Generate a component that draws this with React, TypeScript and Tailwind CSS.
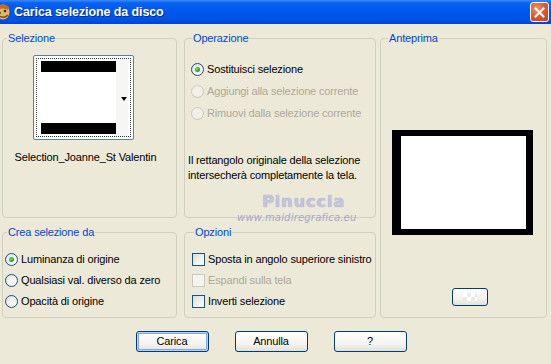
import React from 'react';

const font = "font-['Liberation_Sans',Arial,sans-serif]";

function Group({ label, className, labelClass, children }: { label: string; className?: string; labelClass?: string; children?: React.ReactNode }) {
  return (
    <fieldset className={`relative min-w-0 border border-[#D0D0BF] rounded-[4px] ${className ?? ''}`}>
      <legend className={`px-[1px] text-[11px] leading-[14px] text-[#0046D5] ${labelClass ?? 'ml-[5px]'}`}>{label}</legend>
      {children}
    </fieldset>
  );
}

function Radio({ checked, disabled, label }: { checked?: boolean; disabled?: boolean; label: string }) {
  return (
    <div className="flex items-center h-[20px] whitespace-nowrap">
      <span
        className={`relative w-[13px] h-[13px] rounded-full border shrink-0 ${
          disabled
            ? 'border-[#CAC8BB] bg-[#F0EFE8]'
            : 'border-[#1C5180] bg-[radial-gradient(circle_at_65%_65%,#FFFFFF_0%,#F4F3EE_40%,#DCDBD4_100%)]'
        }`}
      >
        {checked && (
          <span className="absolute left-[3px] top-[3px] w-[5px] h-[5px] rounded-full bg-[radial-gradient(circle_at_40%_40%,#7BE07B_0%,#21A121_60%,#1A7A1A_100%)]" />
        )}
      </span>
      <span className={`ml-[3px] text-[11px] ${disabled ? 'text-[#ACA899]' : 'text-black'}`}>{label}</span>
    </div>
  );
}

function Check({ disabled, label }: { disabled?: boolean; label: string }) {
  return (
    <div className="flex items-center h-[20px] whitespace-nowrap">
      <span
        className={`w-[13px] h-[13px] border shrink-0 ${
          disabled
            ? 'border-[#CAC8BB] bg-[#F4F3EE]'
            : 'border-[#1C5180] bg-[linear-gradient(135deg,#DCDCD7_0%,#F3F3EF_60%,#FFFFFF_100%)]'
        }`}
      />
      <span className={`ml-[3px] text-[11px] ${disabled ? 'text-[#ACA899]' : 'text-black'}`}>{label}</span>
    </div>
  );
}

function XpButton({ children, isDefault }: { children: React.ReactNode; isDefault?: boolean }) {
  return (
    <button
      className={`w-[73px] h-[21px] rounded-[3px] border border-[#003C74] text-[11px] text-black bg-[linear-gradient(to_bottom,#FFFFFF_0%,#F5F4F0_60%,#E3E1D7_100%)] ${
        isDefault ? 'shadow-[inset_0_0_0_1px_#B9D1FA,inset_0_0_0_2px_#86A7E3]' : ''
      }`}
    >
      {children}
    </button>
  );
}

export default function App() {
  return (
    <div className={`w-[551px] h-[364px] overflow-hidden bg-[#ECE9D8] flex flex-col tracking-[-0.15px] ${font}`}>
      {/* Title bar */}
      <div className="relative h-[24px] shrink-0 flex items-center bg-[linear-gradient(to_bottom,#3A8CFF_0%,#0A62F0_12%,#0058EE_45%,#0053E6_80%,#0046D2_100%)]">
        <svg width="14" height="18" viewBox="0 0 14 18" className="ml-[-4px] shrink-0">
          <ellipse cx="7" cy="9" rx="6.5" ry="7.5" fill="#E9B26A" />
          <path d="M2 4 Q7 -1 13 4 L12 7 Q7 4 2 7 Z" fill="#C96A1E" />
          <circle cx="9" cy="8" r="1.3" fill="#3A2A10" />
          <path d="M3 13 Q8 16 12 12" stroke="#8A4A12" strokeWidth="1.5" fill="none" />
          <circle cx="4" cy="10" r="1.2" fill="#2A9A2A" />
        </svg>
        <span className="ml-[4px] text-white font-bold text-[12.5px] tracking-[-0.1px] [text-shadow:1px_1px_0_#0A2A8A]">
          Carica selezione da disco
        </span>
        <div className="ml-auto mr-[2px] w-[19px] h-[20px] rounded-[3px] border border-white flex items-center justify-center bg-[radial-gradient(circle_at_35%_30%,#F0916A_0%,#E0582E_50%,#C43A16_100%)]">
          <svg width="11" height="11" viewBox="0 0 11 11">
            <path d="M1.5 1.5 L9.5 9.5 M9.5 1.5 L1.5 9.5" stroke="white" strokeWidth="2" strokeLinecap="square" />
          </svg>
        </div>
      </div>

      {/* Body */}
      <div className="flex pl-[2px] pt-[7px]">
        <div className="grid grid-cols-[175px_192px] grid-rows-[187px_93px] gap-x-[7px] gap-y-[7px]">
          <Group label="Selezione" labelClass="ml-[4px]">
            <div className="flex flex-col items-center pt-[10px]">
              <div className="mr-[12px] w-[101px] h-[85px] rounded-[2px] border border-[#5B7DA8] bg-white p-[2px]">
                <div className="relative w-full h-full border border-dotted border-[#333] bg-white">
                  <div className="absolute left-[4px] top-[2px] w-[78px] h-[11px] bg-black" />
                  <div className="absolute left-[4px] bottom-[2px] w-[78px] h-[11px] bg-black" />
                  <div className="absolute right-[2px] top-0 bottom-0 w-[12px] bg-[#F6F6F4]" />
                  <div className="absolute right-[3px] top-[38px] w-0 h-0 border-l-[3px] border-r-[3px] border-t-[4px] border-l-transparent border-r-transparent border-t-black" />
                </div>
              </div>
              <div className="mt-[9px] mr-[8px] text-[11px] text-black whitespace-nowrap">Selection_Joanne_St Valentin</div>
            </div>
          </Group>

          <Group label="Operazione" labelClass="ml-[7px]">
            <div className="pl-[6px] pt-[14px] flex flex-col gap-[2px]">
              <Radio checked label="Sostituisci selezione" />
              <Radio disabled label="Aggiungi alla selezione corrente" />
              <Radio disabled label="Rimuovi dalla selezione corrente" />
            </div>
            <p className="pl-[3px] mt-[30px] text-[11px] leading-[15px] text-black whitespace-nowrap">
              Il rettangolo originale della selezione
              <br />
              intersecherà completamente la tela.
            </p>
            <div className="absolute left-[52px] top-[147px] flex flex-col items-center pointer-events-none">
              <span className="ml-[14px] font-['DejaVu_Sans',sans-serif] font-bold text-[16px] leading-[19px] tracking-[1px] text-[#C4C4DE] [text-shadow:0_0_1px_#9090B8]">
                Pinuccia
              </span>
              <span className="font-['DejaVu_Sans',sans-serif] italic text-[10px] leading-[14px] tracking-[0.2px] text-[#A8A8C6]">
                www.maidiregrafica.eu
              </span>
            </div>
          </Group>

          <Group label="Crea selezione da" labelClass="ml-[4px]">
            <div className="pl-[2px] pt-[10px] flex flex-col gap-[1px]">
              <Radio checked label="Luminanza di origine" />
              <Radio label="Qualsiasi val. diverso da zero" />
              <Radio label="Opacità di origine" />
            </div>
          </Group>

          <Group label="Opzioni" labelClass="ml-[9px]">
            <div className="pl-[7px] pt-[10px] flex flex-col gap-[1px]">
              <Check label="Sposta in angolo superiore sinistro" />
              <Check disabled label="Espandi sulla tela" />
              <Check label="Inverti selezione" />
            </div>
          </Group>
        </div>

        <Group label="Anteprima" className="ml-[4px] w-[167px] h-[287px]" labelClass="ml-[7px]">
          <div className="flex flex-col items-center">
            <div className="mt-[85px] ml-[-2px] w-[141px] h-[105px] bg-white border-l-[9px] border-t-[6px] border-r-[7px] border-b-[6px] border-black" />
            <div className="mt-[53px] ml-[12px] w-[36px] h-[18px] rounded-[3px] border border-[#003C74] bg-[linear-gradient(to_bottom,#FFFFFF_0%,#F3F2EE_60%,#E4E2DA_100%)] flex items-center justify-center">
              <div className="w-[14px] h-[8px] bg-[repeating-conic-gradient(#EAEAEA_0%_25%,#FFFFFF_0%_50%)] bg-[length:8px_8px]" />
            </div>
          </div>
        </Group>
      </div>

      {/* Buttons */}
      <div className="flex justify-center gap-[26px] mt-[13px] ml-[-9px]">
        <XpButton isDefault>Carica</XpButton>
        <XpButton>Annulla</XpButton>
        <XpButton>?</XpButton>
      </div>
    </div>
  );
}
